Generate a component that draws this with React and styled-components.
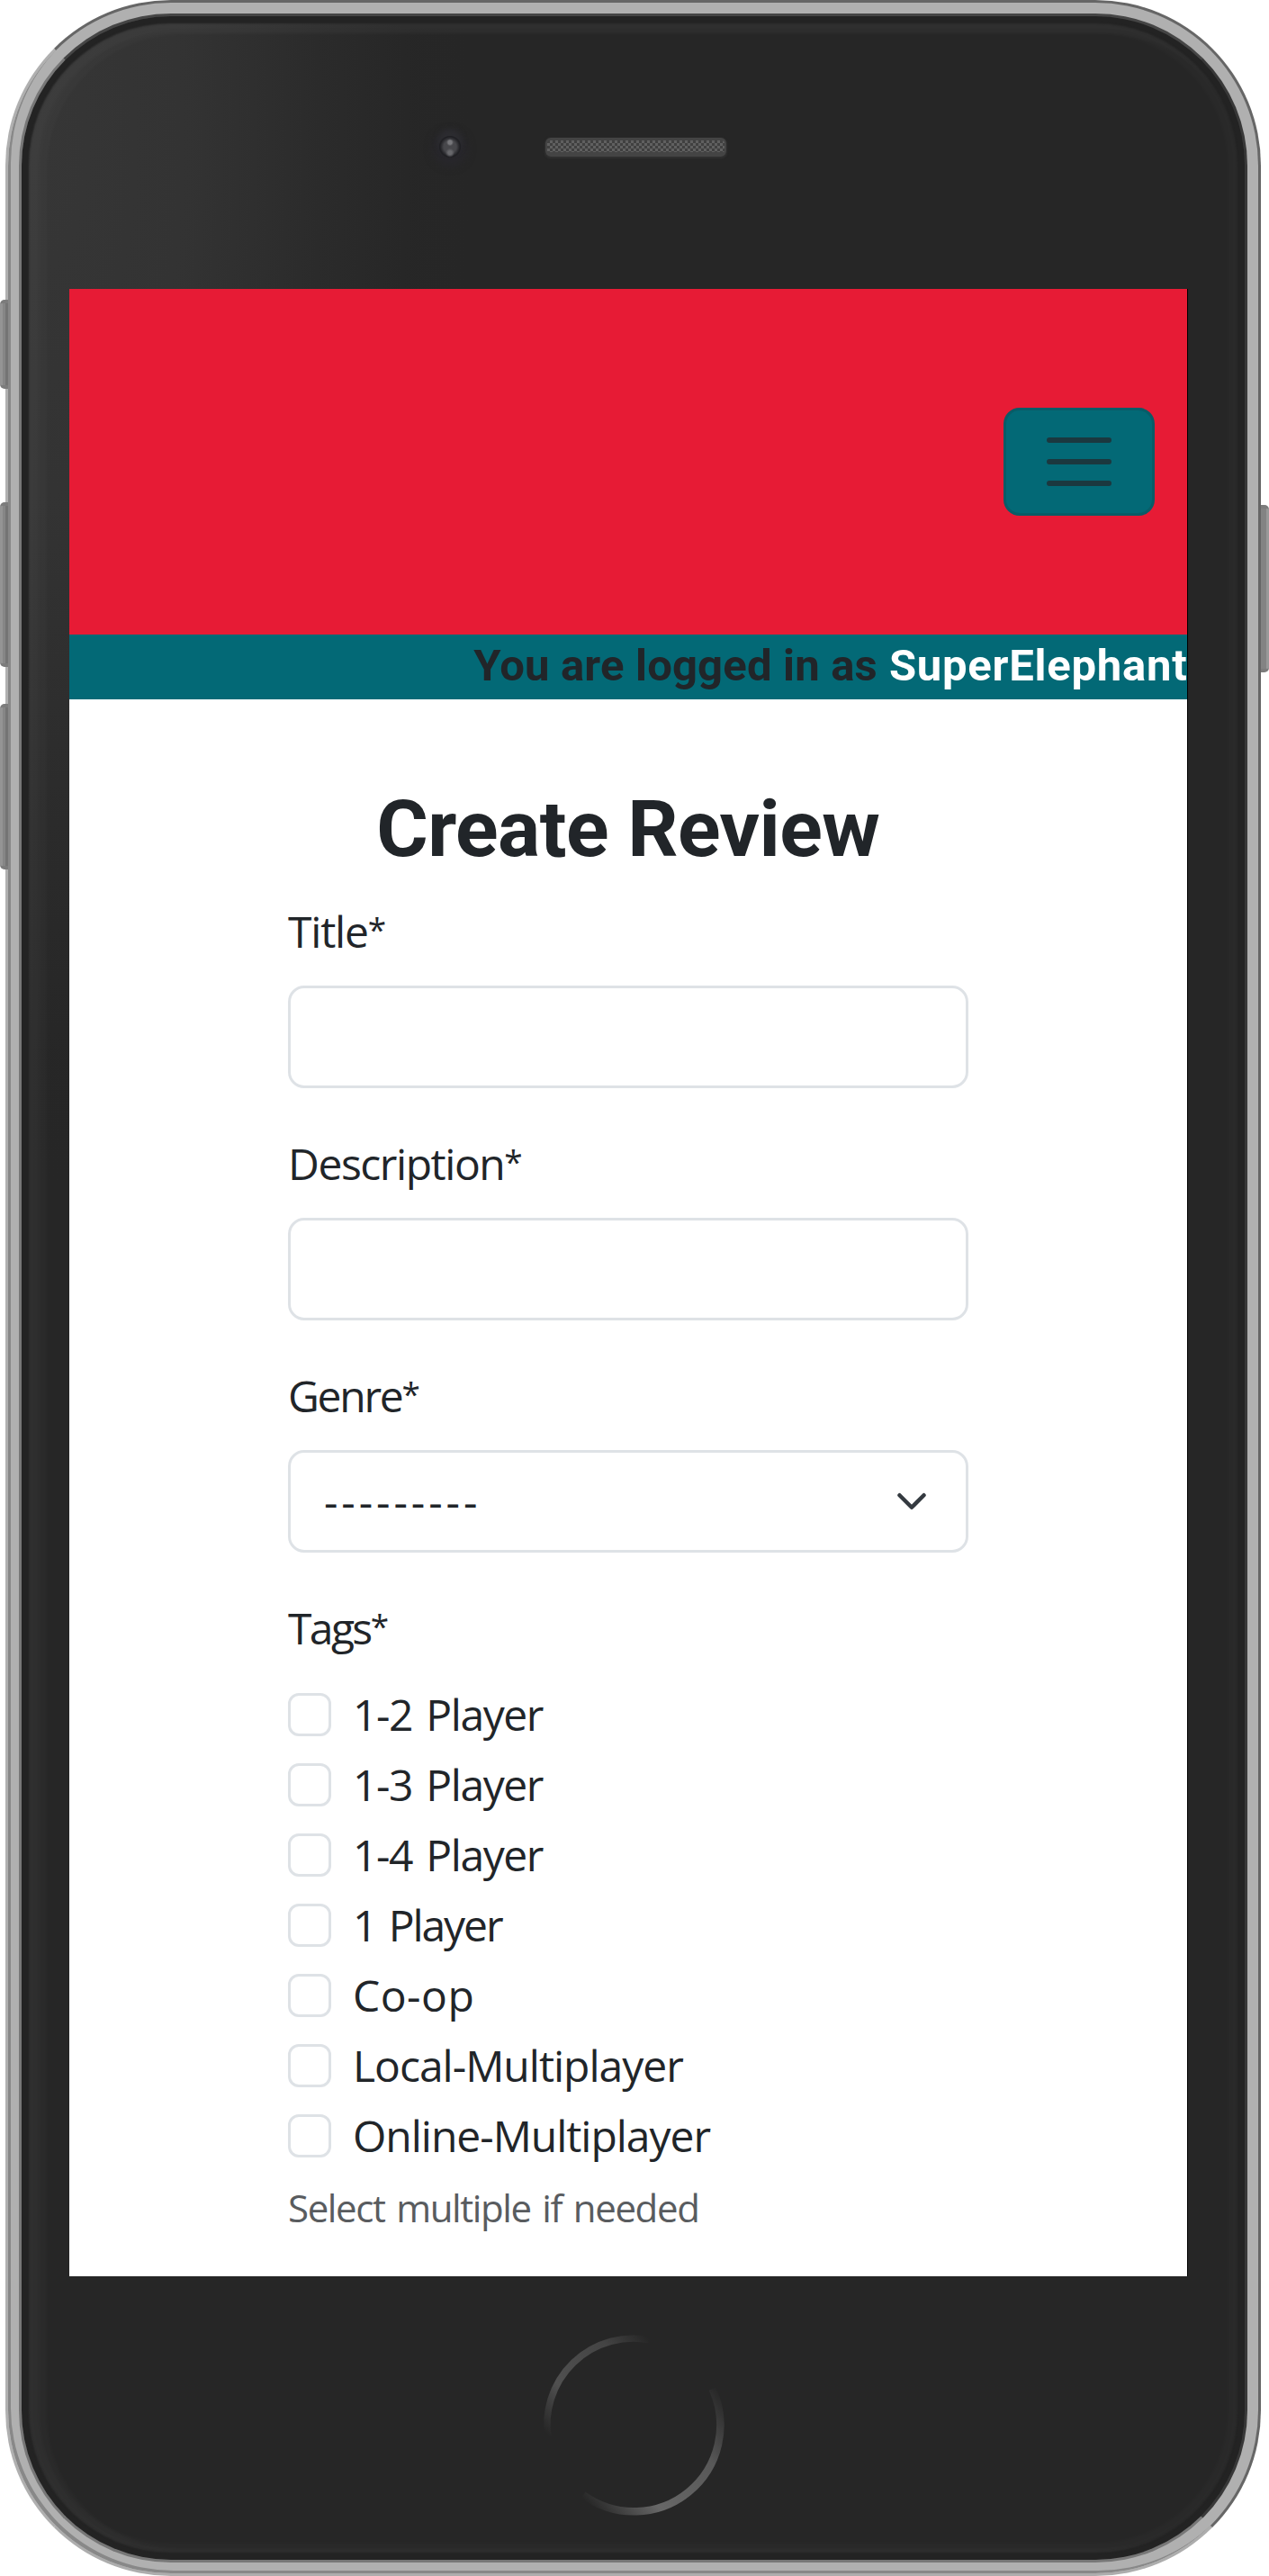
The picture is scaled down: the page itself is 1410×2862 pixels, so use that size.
import React from 'react';
import styled, { createGlobalStyle } from 'styled-components';

const GlobalStyle = createGlobalStyle`
  *, *::before, *::after { box-sizing: border-box; }
  body { margin: 0; background: #fff; }
`;

/* ---------- Phone frame ---------- */

const Stage = styled.div`
  position: relative;
  width: 1410px;
  height: 2862px;
  padding: 0 9px 0 6px;
  overflow: hidden;
  background: #fff;
`;

const Rim = styled.div`
  display: flex;
  width: 1395px;
  height: 2862px;
  padding: 12px;
  border: 3px solid;
  border-color: #666 #666 #adadad #b0b0b0;
  border-radius: 184px;
  background: #b0b0b0;
  box-shadow: inset 3px -3px 0 #888;
`;

const Glass = styled.div`
  display: flex;
  flex-direction: column;
  width: 1365px;
  height: 2832px;
  border: 3px solid;
  border-color: #454545 #383838 #777 #777;
  border-radius: 169px;
  background:
    radial-gradient(
      ellipse 480px 1150px at 20px 150px,
      #363636 0%,
      rgba(54, 54, 54, 0.8) 35%,
      rgba(48, 48, 48, 0.5) 65%,
      rgba(40, 40, 40, 0.2) 88%,
      rgba(38, 38, 38, 0) 100%
    ),
    #262626;
  box-shadow:
    inset 0 0 2px 8px #232323,
    inset 12px 4px 5px 16px rgba(255, 255, 255, 0.025),
    inset 0 0 5px 19px rgba(255, 255, 255, 0.02);
`;

const SideButton = styled.div`
  position: absolute;
  top: ${(p) => p.$top}px;
  ${(p) => (p.$side === 'left' ? 'left: 0;' : 'right: 0;')}
  width: 9px;
  height: ${(p) => p.$height}px;
  border-top: 4px solid #7c7c7c;
  border-bottom: 4px solid #7c7c7c;
  border-radius: ${(p) => (p.$side === 'left' ? '5px 0 0 5px' : '0 5px 5px 0')};
  background: ${(p) =>
    p.$side === 'left'
      ? 'linear-gradient(to right, #949494 0 3px, #868686 3px 6px, #747474 6px)'
      : 'linear-gradient(to right, #838383 0 6px, #999 6px)'};
`;

const TopBezel = styled.div`
  display: flex;
  flex: none;
  height: 303px;
  padding: 133px 0 0 464px;
  gap: 94px;
`;

const Camera = styled.div`
  width: 24px;
  height: 24px;
  border-radius: 50%;
  background: radial-gradient(circle at 50% 30%, #77777b 0 2px, transparent 4px),
    radial-gradient(circle at 50% 78%, #68686c 0 2px, transparent 5px),
    radial-gradient(circle, #47474b 0 7px, #202024 11px);
  box-shadow: 0 -6px 6px 1px #2d2d31, 0 2px 10px 7px #28272c;
`;

const Speaker = styled.div`
  width: 201px;
  height: 21px;
  margin-top: 2px;
  border-radius: 6px;
  border: solid #444;
  border-width: 3px 2px 5px;
  background: repeating-conic-gradient(#606060 0 25%, #404040 0 50%) 0 0 / 6px 6px;
  box-shadow: 0 1px 2px 1px #303030;
`;

const BottomBezel = styled.div`
  flex: 1;
  padding: 55px 0 0 570px;
`;

const HomeRing = () => (
  <svg width="220" height="220" viewBox="0 0 220 220" fill="none">
    <defs>
      <linearGradient id="ringTop" gradientUnits="userSpaceOnUse" x1="12" y1="118" x2="124" y2="12">
        <stop offset="0" stopColor="#262626" />
        <stop offset="0.3" stopColor="#505050" />
        <stop offset="0.75" stopColor="#444" />
        <stop offset="1" stopColor="#262626" />
      </linearGradient>
      <linearGradient id="ringBottom" gradientUnits="userSpaceOnUse" x1="200" y1="66" x2="52" y2="190">
        <stop offset="0" stopColor="#262626" />
        <stop offset="0.3" stopColor="#585858" />
        <stop offset="0.7" stopColor="#676767" />
        <stop offset="1" stopColor="#262626" />
      </linearGradient>
    </defs>
    <path d="M14.9 124 A96 96 0 0 1 127 15.5" stroke="url(#ringTop)" strokeWidth="7.5" />
    <path d="M197.5 70 A96 96 0 0 1 54 188" stroke="url(#ringBottom)" strokeWidth="8.5" />
  </svg>
);

/* ---------- Web page on the screen ---------- */

const Screen = styled.div`
  flex: none;
  width: 1243px;
  height: 2208px;
  margin-left: 53px;
  border-right: 1px solid #000;
  background: #fff;
  color: #212529;
  font-family: "Open Sans", "Noto Sans", sans-serif;
  font-size: 48px;
  line-height: 72px;
`;

const Navbar = styled.header`
  display: flex;
  align-items: center;
  justify-content: flex-end;
  height: 384px;
  padding-right: 36px;
  background: #e71b35;
`;

const Toggler = styled.button`
  display: flex;
  align-items: center;
  justify-content: center;
  width: 168px;
  height: 120px;
  padding: 0;
  border: 3px solid #095c67;
  border-radius: 18px;
  background: #036976;
`;

const UserBar = styled.div`
  display: flex;
  justify-content: flex-end;
  gap: 13px;
  height: 72px;
  background: #036976;
  font: bold 49px/69px Roboto, "Noto Sans", sans-serif;
  white-space: nowrap;
`;

const Status = styled.span`
  letter-spacing: 0.17px;
`;

const UserName = styled.span`
  margin-right: -0.5px;
  color: #fff;
  letter-spacing: 0.75px;
`;

const Main = styled.main`
  padding: 92px 243.5px 0 243px;
`;

const Heading = styled.h1`
  margin: 0 0 26px;
  font: bold 88px/104px Roboto, "Noto Sans", sans-serif;
  letter-spacing: -0.54px;
  text-align: center;
  white-space: nowrap;
`;

const Field = styled.div`
  margin-bottom: 48px;
`;

const Label = styled.label`
  display: flex;
  height: 72px;
  margin-bottom: 24px;
  letter-spacing: ${(p) => p.$track}px;
`;

const Asterisk = styled.span`
  font-size: 37px;
  line-height: 66px;
`;

const TextInput = styled.input`
  display: block;
  width: 100%;
  height: 114px;
  padding: 0 36px;
  border: 3px solid #dee2e6;
  border-radius: 18px;
  background: #fff;
  font: inherit;
`;

const SelectBox = styled.div`
  display: flex;
  align-items: center;
  justify-content: space-between;
  height: 114px;
  padding: 0 42px 0 37px;
  border: 3px solid #dee2e6;
  border-radius: 18px;
  letter-spacing: 3.92px;
`;

const CheckRow = styled.label`
  display: flex;
  gap: 24px;
  height: 72px;
  margin-bottom: 6px;
  letter-spacing: ${(p) => p.$track}px;
  word-spacing: 4px;
  white-space: nowrap;
`;

const Checkbox = styled.input`
  appearance: none;
  flex: none;
  width: 48px;
  height: 48px;
  margin: 12px 0 0;
  border: 3px solid #dee2e6;
  border-radius: 12px;
  background: #fff;
`;

const HelpText = styled.div`
  margin-top: 12px;
  color: #595c5f;
  font-size: 42px;
  line-height: 63px;
  letter-spacing: -1.38px;
  word-spacing: 3px;
`;

const tags = [
  ['1-2 Player', -1.4],
  ['1-3 Player', -1.4],
  ['1-4 Player', -1.4],
  ['1 Player', -2.1],
  ['Co-op', 0.5],
  ['Local-Multiplayer', -1.0],
  ['Online-Multiplayer', -1.03],
];

const RequiredLabel = ({ text, track }) => (
  <Label $track={track}>
    {text}
    <Asterisk>*</Asterisk>
  </Label>
);

export default function App() {
  return (
    <>
      <GlobalStyle />
      <Stage>
        <Rim>
          <Glass>
            <TopBezel>
              <Camera />
              <Speaker />
            </TopBezel>
            <Screen>
              <Navbar>
                <Toggler aria-label="Toggle navigation">
                  <svg width="90" height="90" viewBox="0 0 30 30">
                    <path d="M4 7h22M4 15h22M4 23h22" stroke="#1b383f" strokeWidth="2" strokeLinecap="round" />
                  </svg>
                </Toggler>
              </Navbar>
              <UserBar>
                <Status>You are logged in as</Status>
                <UserName>SuperElephant</UserName>
              </UserBar>
              <Main>
                <Heading>Create Review</Heading>
                <Field>
                  <RequiredLabel text="Title" track={-1.2} />
                  <TextInput />
                </Field>
                <Field>
                  <RequiredLabel text="Description" track={-1.45} />
                  <TextInput />
                </Field>
                <Field>
                  <RequiredLabel text="Genre" track={-2.3} />
                  <SelectBox>
                    ---------
                    <svg width="36" height="36" viewBox="0 0 16 16" fill="none">
                      <path d="m2 5 6 6 6-6" stroke="#343a40" strokeWidth="2" strokeLinecap="round" strokeLinejoin="round" />
                    </svg>
                  </SelectBox>
                </Field>
                <RequiredLabel text="Tags" track={-2.6} />
                {tags.map(([name, track]) => (
                  <CheckRow key={name} $track={track}>
                    <Checkbox type="checkbox" />
                    {name}
                  </CheckRow>
                ))}
                <HelpText>Select multiple if needed</HelpText>
              </Main>
            </Screen>
            <BottomBezel>
              <HomeRing />
            </BottomBezel>
          </Glass>
        </Rim>
        <SideButton $side="left" $top={333} $height={99} />
        <SideButton $side="left" $top={558} $height={183} />
        <SideButton $side="left" $top={782} $height={184} />
        <SideButton $side="right" $top={561} $height={186} />
      </Stage>
    </>
  );
}
